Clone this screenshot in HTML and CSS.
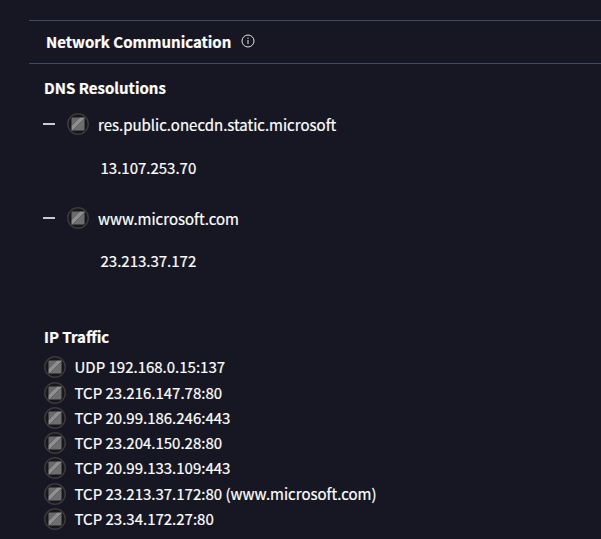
FILE: index.html
```html
<!DOCTYPE html>
<html lang="en">
<head>
<meta charset="utf-8">
<title>Network Communication</title>
<link rel="stylesheet" href="styles.css">
</head>
<body>
<svg width="0" height="0" class="defs">
  <symbol id="globe" viewBox="0 0 22 22">
    <circle cx="11" cy="11" r="10.25" fill="#18181a" stroke="#3a3a3d" stroke-width="1.5"/>
    <path d="M4.5 5.5a1 1 0 0 1 1-1H13L4.5 13Z" fill="#6a6a6c"/>
    <path d="M13 4.5H17.5V5.5L5.5 17.5H4.5V13Z" fill="#8f8f91"/>
    <path d="M17.5 5.5V16.5a1 1 0 0 1-1 1H5.5Z" fill="#6e6e70"/>
  </symbol>
</svg>
<main class="panel">
  <header class="panel-head">
    <h1 class="panel-title">Network Communication</h1>
    <svg class="info" width="14" height="14" viewBox="0 0 14 14">
      <circle cx="7" cy="7" r="6" fill="none" stroke="#e4e4e4" stroke-width="1"/>
      <path d="M7 6V10M7 3.6V4.9" stroke="#e4e4e4" stroke-width="1" fill="none"/>
    </svg>
  </header>
  <section class="dns">
    <h2 class="sub">DNS Resolutions</h2>
    <div class="dns-item">
      <div class="dns-host"><span class="dash"></span><svg class="ico"><use href="#globe"/></svg><span>res.public.onecdn.static.microsoft</span></div>
      <div class="dns-ip">13.107.253.70</div>
    </div>
    <div class="dns-item">
      <div class="dns-host"><span class="dash"></span><svg class="ico"><use href="#globe"/></svg><span>www.microsoft.com</span></div>
      <div class="dns-ip">23.213.37.172</div>
    </div>
  </section>
  <section class="ip">
    <h2 class="sub">IP Traffic</h2>
    <ul class="ip-list">
      <li><svg class="ico"><use href="#globe"/></svg>UDP 192.168.0.15:137</li>
      <li><svg class="ico"><use href="#globe"/></svg>TCP 23.216.147.78:80</li>
      <li><svg class="ico"><use href="#globe"/></svg>TCP 20.99.186.246:443</li>
      <li><svg class="ico"><use href="#globe"/></svg>TCP 23.204.150.28:80</li>
      <li><svg class="ico"><use href="#globe"/></svg>TCP 20.99.133.109:443</li>
      <li><svg class="ico"><use href="#globe"/></svg>TCP 23.213.37.172:80 (www.microsoft.com)</li>
      <li><svg class="ico"><use href="#globe"/></svg>TCP 23.34.172.27:80</li>
    </ul>
  </section>
</main>
</body>
</html>
```
FILE: styles.css
```css
html, body {
  margin: 0;
  height: 539px;
  overflow: hidden;
  background: #161723;
}
body {
  font-family: "Noto Sans CJK SC", "Noto Sans", sans-serif;
  font-size: 15px;
  color: #fff;
  -webkit-text-stroke: 0.2px #fff;
}
.defs { position: absolute; }
.panel {
  margin-left: 29px;
  padding-top: 20px;
}
.panel-head {
  display: flex;
  align-items: center;
  gap: 10px;
  height: 40px;
  padding-left: 17px;
  padding-bottom: 2px;
  border-top: 1px solid #3f4869;
  border-bottom: 1px solid #3f4869;
}
.panel-title {
  margin: 0;
  font-size: 15px;
  font-weight: 700;
}
.dns { padding: 13px 0 0 15px; }
.sub {
  margin: 0;
  font-size: 15px;
  line-height: 22px;
  font-weight: 700;
}
.dns-item { height: 94px; }
.dns-host {
  display: flex;
  align-items: center;
  height: 22px;
  padding-top: 14px;
}
.dash {
  width: 12px;
  height: 2px;
  margin: 0 12px 0 -1px;
  background: #c9c9cf;
}
.ico {
  width: 22px;
  height: 22px;
  flex: none;
  margin-right: 9px;
}
.dns-ip {
  margin: 21.5px 0 0 56.5px;
  line-height: 22px;
}
.dns-item + .dns-item .dns-ip { margin-top: 21px; }
.ip { padding: 39px 0 0 15px; }
.ip-list {
  list-style: none;
  margin: 6.6px 0 0;
  padding: 0;
}
.ip-list li {
  display: flex;
  align-items: center;
  height: 25.3px;
  line-height: 22px;
}
.ip-list .ico { margin-right: 8.5px; }
```
